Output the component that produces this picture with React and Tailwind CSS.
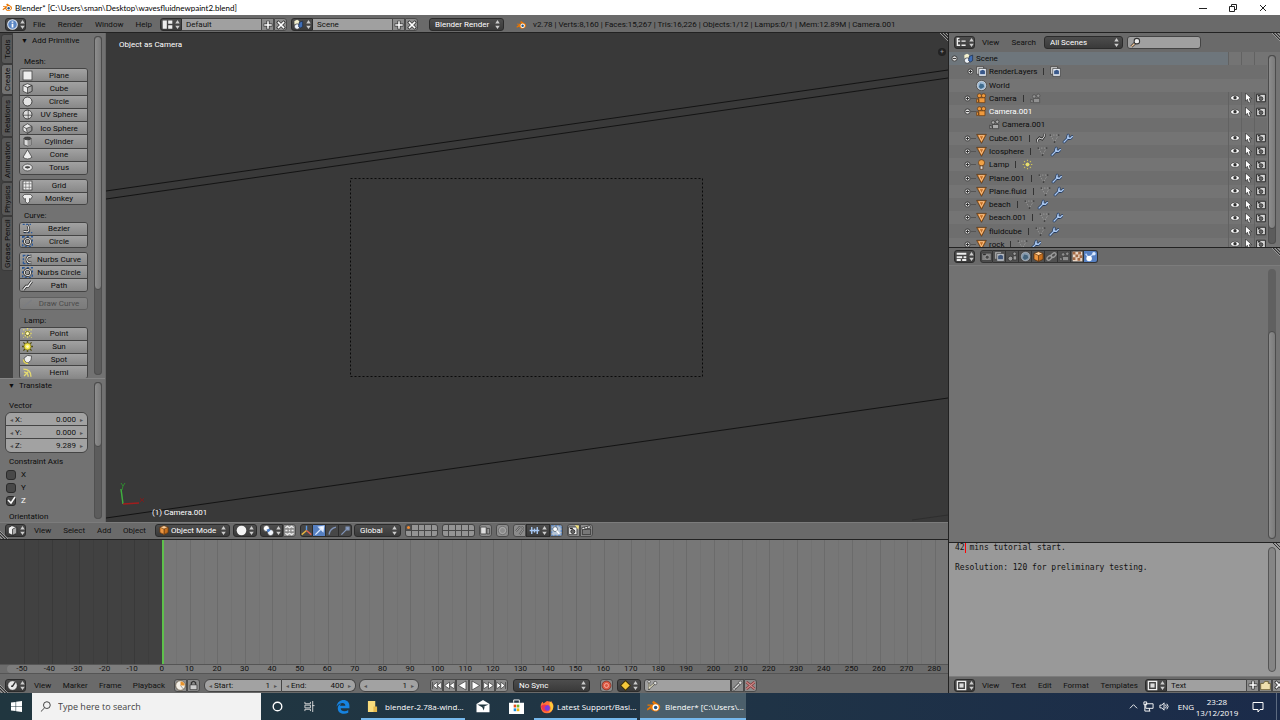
import { useState } from 'react';

const meshGroup = [['Plane', 'plane'], ['Cube', 'cube'], ['Circle', 'circle'], ['UV Sphere', 'uv'], ['Ico Sphere', 'ico'], ['Cylinder', 'cylinder'], ['Cone', 'cone'], ['Torus', 'torus']];
const gridGroup = [['Grid', 'grid'], ['Monkey', 'monkey']];
const bezierGroup = [['Bezier', 'bezier'], ['Circle', 'curveCircle']];
const nurbsGroup = [['Nurbs Curve', 'nurbs'], ['Nurbs Circle', 'curveCircle'], ['Path', 'path']];
const lampGroup = [['Point', 'point'], ['Sun', 'sun'], ['Spot', 'spot'], ['Hemi', 'hemi']];

const tree = [
  { name: 'Camera', icon: 'camera', data: ['camData'], open: '+' },
  { name: 'Camera.001', icon: 'camera', data: [], open: '-', active: true },
  { name: 'Camera.001', icon: 'camData', child: true },
  { name: 'Cube.001', icon: 'mesh', data: ['anim', 'meshData', 'wrench'], open: '+' },
  { name: 'Icosphere', icon: 'mesh', data: ['meshData', 'wrench'], open: '+' },
  { name: 'Lamp', icon: 'lamp', data: ['lampData'], open: '+' },
  { name: 'Plane.001', icon: 'mesh', data: ['meshData', 'wrench'], open: '+' },
  { name: 'Plane.fluid', icon: 'mesh', data: ['meshData', 'wrench'], open: '+' },
  { name: 'beach', icon: 'mesh', data: ['meshData', 'wrench'], open: '+' },
  { name: 'beach.001', icon: 'mesh', data: ['meshData', 'wrench'], open: '+' },
  { name: 'fluidcube', icon: 'mesh', data: ['meshData', 'wrench'], open: '+' },
  { name: 'rock', icon: 'mesh', data: ['meshData', 'wrench'], open: '+' },
];

const frames = Array.from({ length: 34 }, (_, i) => -50 + i * 10);

// all icons share a 16x16 box
const icons = {
  plane: <rect x="1.500" y="1.500" width="13" height="13" fill="#eee" stroke="#333" />,
  cube: <g stroke="#333" strokeLinejoin="round"><path d="M8 1l6.500 2.500v8.500l-6.500 3-6.500-3V3.500z" fill="#eee" /><path d="M8 6.500V15l6.500-3V3.500z" fill="#a5a5a5" /><path d="M1.500 3.500L8 6.500l6.500-3" fill="none" /></g>,
  circle: <circle cx="8" cy="8" r="6.500" fill="#e4e4e4" stroke="#333" strokeWidth="1.300" />,
  uv: <g stroke="#333" fill="none"><circle cx="8" cy="8" r="6.500" fill="#ddd" strokeWidth="1.300" /><path d="M9 1.500v13M1.500 9h13" /></g>,
  ico: <g stroke="#333"><path d="M8 1l6.500 4v6L8 15l-6.500-4V5z" fill="#e8e8e8" /><path d="M8 15l-2-7 8-3v6z" fill="#999" /><path d="M6 8L1.500 5" /></g>,
  cylinder: <g stroke="#333"><path d="M3 3v10q5 3 10 0V3" fill="#ddd" /><path d="M8 5v9q4 0 5-1V3z" fill="#999" stroke="none" /><ellipse cx="8" cy="3.500" rx="5" ry="2" fill="#444" /></g>,
  cone: <path d="M8 1l6.500 11q-6.500 5-13 0z" fill="#eee" stroke="#333" />,
  torus: <g stroke="#333"><ellipse cx="8" cy="8" rx="7" ry="5" fill="#e4e4e4" /><path d="M4.500 7.500q3.500 3 7 0q-3.500-2-7 0" fill="#555" /></g>,
  grid: <g><rect x="1.500" y="1.500" width="13" height="13" fill="#f2f2f2" stroke="#333" /><path d="M5.500 2v12M10.500 2v12M2 5.500h12M2 10.500h12" stroke="#666" /></g>,
  monkey: <path d="M1 5q2-4 5-3h4q3-1 5 3l-2 4-2-1v5l-3 2-3-2V8L3 9z" fill="#eee" stroke="#333" />,
  bezier: <g fill="none"><path d="M1 2h12M3 14h12" stroke="#2c5a9b" strokeDasharray="3 2" strokeWidth="2" /><path d="M2 12q9 2 8-3T8 3" stroke="#222" strokeWidth="3.500" /><path d="M2 12q9 2 8-3T8 3" stroke="#eee" strokeWidth="1.500" /></g>,
  curveCircle: <g fill="none"><path d="M1 1h14v14H1z" stroke="#2c5a9b" strokeDasharray="3 3" strokeWidth="2" /><circle cx="8" cy="8" r="4.500" stroke="#222" strokeWidth="3.500" /><circle cx="8" cy="8" r="4.500" stroke="#ddd" strokeWidth="1.500" /></g>,
  nurbs: <g fill="none"><path d="M2 1v14M2 2h11M2 14h11" stroke="#2c5a9b" strokeDasharray="3 2" strokeWidth="2" /><path d="M14 3q-7 0-7 5t7 5" stroke="#222" strokeWidth="3.500" /><path d="M14 3q-7 0-7 5t7 5" stroke="#eee" strokeWidth="1.500" /></g>,
  path: <g fill="none"><path d="M2 14l4-5h3l5-7" stroke="#222" strokeWidth="4" /><path d="M2 14l4-5h3l5-7" stroke="#eee" strokeWidth="2" /></g>,
  stroke: <path d="M2 13L14 3" stroke="#8a8f9b" strokeWidth="2" />,
  point: <g stroke="#e9dd62" strokeWidth="2"><path d="M8 0v16M0 8h16M2 2l12 12M14 2L2 14" strokeDasharray="2 2" /><circle cx="8" cy="8" r="3" fill="#fff9b0" stroke="#56500f" strokeWidth="1" /></g>,
  sun: <g><path d="M8 0v16M0 8h16M2 2l12 12M14 2L2 14" stroke="#514d1b" strokeWidth="2" /><circle cx="8" cy="8" r="5" fill="#f4e94c" stroke="#7d751c" /><circle cx="8" cy="8" r="2" fill="#fffcc9" /></g>,
  spot: <g stroke="#333"><path d="M3 6l5-4 6 1-1 6-4 4q-6-1-6-7z" fill="#eee" /><path d="M2 8q1 6 7 6" stroke="#e6d84f" strokeWidth="2" fill="none" /></g>,
  hemi: <g fill="none" stroke="#e6db70" strokeWidth="2"><path d="M2 3q11 0 11 11" /><path d="M3 7q6 1 6 7M3 13l6-6" /></g>,
  info: <g><circle cx="8" cy="8" r="7" fill="#5a86c4" stroke="#dde6f3" strokeWidth="1.500" /><path d="M8 3.500v2M8 7v5.500" stroke="#fff" strokeWidth="2.500" /></g>,
  layout: <g fill="#eee"><path d="M1 2h6v12H1zM9 2h6v5H9zM9 9h6v5H9z" /></g>,
  scene: <g><path d="M2 3l4-2 3 2v5H2z" fill="#f4f1cf" /><circle cx="6" cy="11" r="4" fill="#eef3fa" stroke="#333" /><path d="M9 5l5-2v8l-3 2-3-2z" fill="#3f6db5" stroke="#1c2c47" /></g>,
  view3d: <g stroke="#222"><path d="M2 4l5-3 7 2v9l-6 3-6-3z" fill="#eee" /><path d="M8 6v9l6-3V3z" fill="#aaa" /></g>,
  clock: <g><circle cx="8" cy="8" r="7" fill="#e8e8e8" stroke="#222" /><path d="M12 3L8 9H6" stroke="#333" strokeWidth="2" fill="none" /></g>,
  clockKey: <g><circle cx="8" cy="8" r="7" fill="#f4f0e8" stroke="#594a33" /><path d="M8 8V2a6 6 0 0 1 6 6z" fill="#e8932c" /><path d="M8 8l4 5" stroke="#777" /></g>,
  lock: <g><path d="M5 8V4q3-4 6 0v4" stroke="#333" strokeWidth="2" fill="none" /><path d="M3 7h10v7H3z" fill="#ccc" stroke="#333" /></g>,
  list: <path d="M2 2v10h4M2 6h4M8 6h6M8 12h6M1 2h4" stroke="#eee" strokeWidth="2" fill="none" />,
  props: <path d="M1 4h14M1 9h8M11 9h4M1 13h6M9 13h6" stroke="#eee" strokeWidth="3" />,
  doc: <g><path d="M2 2h12v12H2z" fill="#444" stroke="#eee" strokeWidth="2" /><path d="M5 5h6v6H5z" fill="#ddd" /></g>,
  magnify: <g fill="none"><path d="M2 14l5-5" stroke="#333" strokeWidth="4" /><path d="M2 14l5-5" stroke="#f4c89b" strokeWidth="2" /><circle cx="10" cy="6" r="4" stroke="#333" fill="#eee" strokeWidth="1.500" /></g>,
  layers: <g><path d="M1 1h10v11H1z" fill="#ddd" stroke="#333" /><path d="M4 3.500h11v11.500H4z" fill="#e6ecf4" stroke="#333" /><path d="M6 7l4-1.500 3 1.500v5H6z" fill="#39588a" /></g>,
  world: <g><circle cx="8" cy="8" r="6.500" fill="#9fbbd6" stroke="#e6e6e6" /><circle cx="8" cy="8" r="7.500" fill="none" stroke="#444" /><path d="M4 10l2-5 5 1 1 4-5 3z" fill="#406c8e" /></g>,
  camera: <g fill="#ef9a3e" stroke="#5e3510"><circle cx="5" cy="4" r="3" /><circle cx="11" cy="4" r="3" /><path d="M4 7h9v7H4zM1 8l3 2v3l-3 1z" /></g>,
  camData: <g fill="none" stroke="#333"><circle cx="6" cy="5" r="2.500" fill="#aaa" /><circle cx="12" cy="4" r="2.500" fill="#aaa" /><path d="M5 8h9v6H5zM1 9l4 2v2l-4 1z" fill="#aaa" /></g>,
  mesh: <g><path d="M1 2h14L8 15z" fill="#e48f3c" stroke="#4d2d10" /><path d="M4.500 4h7L8 11z" fill="#c56e20" stroke="#ffd8ae" /></g>,
  lamp: <g><circle cx="8" cy="5.500" r="4.500" fill="#f0a246" stroke="#5e3510" /><path d="M6 10h4v5H6z" fill="#ddd" stroke="#5e3510" /></g>,
  meshData: <g fill="none"><path d="M2 3h12L8 13z" stroke="#aaa" strokeDasharray="2 2" /><path d="M1 2h2v2H1zM13 2h2v2h-2zM7 12h2v2H7z" fill="#333" /></g>,
  lampData: <g><path d="M8 1v14M1 8h14M3 3l10 10M13 3L3 13" stroke="#cfc355" strokeWidth="1.500" strokeDasharray="2 2" /><circle cx="8" cy="8" r="2.500" fill="#e8df70" /></g>,
  wrench: <g fill="none" strokeLinecap="round"><path d="M3 13l7-7M9 3l-1 4 4 1 3-3" stroke="#233a5d" strokeWidth="4" /><path d="M3 13l7-7M9 3l-1 4 4 1 3-3" stroke="#a9c6ee" strokeWidth="2" /></g>,
  anim: <g fill="none"><path d="M3 14l-1-4 3-3 4 2 3-4V1" stroke="#222" strokeWidth="3.500" /><path d="M3 14l-1-4 3-3 4 2 3-4V1" stroke="#ddd" strokeWidth="1.500" /></g>,
  eye: <g><path d="M0 8q8-9 16 0-8 8-16 0" fill="#fff" stroke="#333" /><circle cx="8" cy="7.500" r="2.700" fill="#333" /></g>,
  cursor: <path d="M4 0v13l3-3 2 6 3-1-2-6h4z" fill="#fff" stroke="#222" />,
  still: <g><path d="M1 2h14v12H1z" fill="#d5d5d5" stroke="#222" strokeWidth="1.500" /><circle cx="8" cy="9" r="3" fill="#666" stroke="#111" /><path d="M3 4.500h4" stroke="#111" strokeWidth="2" /></g>,
  stillDim: <g><path d="M1 3h14v11H1z" fill="#999" stroke="#222" /><path d="M3 5h4" stroke="#222" strokeWidth="2" /><circle cx="9" cy="9" r="3" fill="#444" stroke="#ccc" /></g>,
  sceneDim: <g fill="#bbb" stroke="#222"><circle cx="5" cy="11" r="3.500" /><path d="M9 7h5v6H9z" /><circle cx="11" cy="4" r="2.500" /></g>,
  cubeO: <g stroke="#5e3510"><path d="M8 1l6.500 2.500V12L8 15l-6.500-3V3.500z" fill="#ffd09a" /><path d="M8 6.500V15l6.500-3V3.500z" fill="#c66f1d" /><path d="M1.500 3.500L8 6.500V15l-6.500-3z" fill="#ed9640" /></g>,
  chain: <g fill="none" stroke="#bbb" strokeWidth="2"><ellipse cx="5" cy="10" rx="4" ry="2.500" transform="rotate(-40 5 10)" /><ellipse cx="11" cy="6" rx="4" ry="2.500" transform="rotate(-40 11 6)" /></g>,
  checker: <g><path d="M1 1h14v14H1z" fill="#e9d5c4" /><path d="M1 1h4v4H1zM9 1h4v4H9zM5 5h4v4H5zM11 6h4v4h-4zM1 9h4v4H1zM8 10h4v4H8z" fill="#a36a45" /></g>,
  physics: <g fill="none"><path d="M1 4l4 6L14 3" stroke="#bcd4f5" strokeWidth="2" /><circle cx="6" cy="11" r="4" fill="#fff" /><circle cx="13" cy="4" r="2.500" fill="#dceaff" /></g>,
  ball: <circle cx="8" cy="8" r="7" fill="#f4f4f4" />,
  pivot: <g><circle cx="5" cy="5" r="4.500" fill="#fff" stroke="#333" /><circle cx="11" cy="11" r="4.500" fill="#f1f5fb" stroke="#333" /><path d="M5 7l4-2 2 3-4 3z" fill="#4c7fc9" /></g>,
  centers: <g fill="none" stroke="#eee" strokeWidth="2"><path d="M2 4l3-2 3 2 3-2 3 2M2 12l3 2 3-2 3 2 3-2M2 8h3M7 8h2M11 8h3" /></g>,
  axis: <g fill="none" strokeWidth="2"><path d="M8 8V1" stroke="#5d9be8" /><path d="M8 8l-7 6" stroke="#e5b43e" /><path d="M8 8l7 6" stroke="#e0604f" /></g>,
  arrow: <path d="M2 14L11 5M7 3l7-1-1 7z" stroke="#dbe8ff" strokeWidth="2" fill="#fff" />,
  arc: <path d="M3 14q1-9 10-11" stroke="#7f93b8" strokeWidth="2" fill="none" />,
  scaleM: <path d="M2 14l8-8M9 3h4v4H9z" stroke="#7f93b8" strokeWidth="2" fill="#8fa0bd" />,
  linked: <g stroke="#333"><path d="M1 3h8v10H1z" fill="#ddd" /><path d="M10 5h4v8h-4z" fill="#999" /></g>,
  ring: <g fill="none"><circle cx="8" cy="8" r="6" stroke="#666" /><circle cx="8" cy="8" r="4.500" stroke="#bbb" /></g>,
  magnet: <g fill="none"><path d="M3 9l5-6q6-1 5 4l-5 7" stroke="#555" strokeWidth="3" /><path d="M3 9l5-6q6-1 5 4l-5 7" stroke="#bbb" /></g>,
  increment: <path d="M1 8h14M4 3v10M8 5v6M12 3v10" stroke="#a7c8f4" strokeWidth="2" />,
  snapTo: <g><path d="M1 1h14v14H1z" stroke="#5d86bd" strokeWidth="2" strokeDasharray="3 2" fill="#b7c6d8" /><circle cx="6" cy="6" r="3.500" fill="#fff" stroke="#345" /><path d="M8 8l4 5" stroke="#fff" strokeWidth="2" /></g>,
  clap: <g stroke="#222"><path d="M2 6h12v8H2z" fill="#777" /><path d="M1 4l12-3 1 3L2 7z" fill="#eee" /><path d="M5 3l1 3M9 2l1 3" /></g>,
  stillGold: <g><path d="M1 3h12v11H1z" fill="#eee" stroke="#222" /><path d="M3 5h4" stroke="#222" strokeWidth="2" /><circle cx="7" cy="9.500" r="3" fill="#666" stroke="#111" /><path d="M10 0l6 1-1 6z" fill="#f4e27a" /></g>,
  first: <path d="M2 3v10M9 3L3 8l6 5zM15 3L9 8l6 5z" fill="#fff" stroke="#333" />,
  prev: <path d="M8 3L1 8l7 5zM15 3L8 8l7 5z" fill="#fff" stroke="#333" />,
  back: <path d="M13 1.500L2 8l11 6.500z" fill="#fff" stroke="#333" />,
  play: <path d="M3 1.500L14 8 3 14.500z" fill="#fff" stroke="#333" />,
  next: <path d="M1 3l7 5-7 5zM8 3l7 5-7 5z" fill="#fff" stroke="#333" />,
  last: <path d="M14 3v10M1 3l6 5-6 5zM7 3l6 5-6 5z" fill="#fff" stroke="#333" />,
  record: <g><circle cx="8" cy="8" r="6.500" fill="#dd5a44" stroke="#6c2a20" /><circle cx="8" cy="8" r="3" fill="none" stroke="#ffc9bf" /></g>,
  diamond: <path d="M8 1l7 7-7 7-7-7z" fill="#f5c93b" stroke="#3b2f05" strokeWidth="1.500" />,
  key: <g fill="none"><path d="M3 13l8-8" stroke="#444" strokeWidth="4" /><path d="M3 13l8-8" stroke="#ddd" strokeWidth="2" /><circle cx="12" cy="4" r="2.500" stroke="#444" fill="#ddd" /><circle cx="3" cy="13" r="2" stroke="#444" fill="#ddd" /></g>,
  keySet: <g fill="none" stroke="#444"><path d="M3 2v12M3 12l8-7" strokeWidth="3" /><path d="M3 2v11M3 12l8-7" stroke="#e6e0c0" strokeWidth="1.500" /><circle cx="12" cy="4.500" r="2.500" fill="#ddd" /><circle cx="3" cy="2.500" r="2" fill="#ddd" /></g>,
  keyX: <g><path d="M2 3l12 10M14 3L2 13" stroke="#8a3b3b" strokeWidth="4" /><path d="M2 3l12 10M14 3L2 13" stroke="#d69595" strokeWidth="1.500" /></g>,
  folder: <path d="M1 14V5h4l2-3h5v3h3v9z" fill="#efe0ae" stroke="#544818" />,
};

function Icon({ name, className = 'size-[11px]' }) {
  return <svg viewBox="0 0 16 16" className={`${className} shrink-0`} aria-hidden="true">{icons[name]}</svg>;
}

function PlusIcon() {
  return <svg viewBox="0 0 16 16" className="size-[10px]"><path d="M8 1v14M1 8h14" stroke="#333" strokeWidth="5" /><path d="M8 2v12M2 8h12" stroke="#fff" strokeWidth="2.500" /></svg>;
}

function CloseIcon() {
  return <svg viewBox="0 0 16 16" className="size-[10px]"><path d="M2 2l12 12M14 2L2 14" stroke="#333" strokeWidth="5" /><path d="M3 3l10 10M13 3L3 13" stroke="#fff" strokeWidth="2.500" /></svg>;
}

function BlenderLogo({ className }) {
  return (
    <svg viewBox="0 0 24 20" className={`${className} shrink-0`} aria-hidden="true">
      <path d="M11 1l10 7a7.500 7 0 1 1-14 5L2 16l-1-2 6-5H2V7h10L9 4z" fill="#ea7600" />
      <circle cx="14.500" cy="11.500" r="4.800" fill="#fff" />
      <circle cx="14.500" cy="11.500" r="2.700" fill="#265787" />
    </svg>
  );
}

function Updown() {
  return <svg viewBox="0 0 6 12" className="h-[9px] w-[5px] shrink-0"><path d="M3 0l3 4.500H0zM3 12l3-4.500H0z" fill="#ccc" /></svg>;
}

// drag handle in the corner of an area
function Corner({ className }) {
  return <svg viewBox="0 0 8 8" className={`${className} pointer-events-none absolute size-2`}><path d="M0 0l8 8M3 0l5 5M6 0l2 2" stroke="#999" /><path d="M1 0l7 7M4 0l4 4" stroke="#333" /></svg>;
}

// dark editor / datablock type picker
function TypeButton({ icon, label, className = 'w-[21px] rounded-[3px]' }) {
  return (
    <button aria-label={label} className={`${className} h-[13px] shrink-0 flex items-center justify-center gap-[2px] border border-[#2b2b2b] bg-gradient-to-b from-[#4d4d4d] to-[#3a3a3a]`}>
      <Icon name={icon} />
      <Updown />
    </button>
  );
}

function DarkSelect({ label, value, className = '', icon }) {
  return (
    <div className={`${className} relative h-[13px] shrink-0 flex items-center rounded-[3px] border border-[#2b2b2b] bg-gradient-to-b from-[#4d4d4d] to-[#3a3a3a] px-[3px] text-white`}>
      {icon && <Icon name={icon} className="size-[10px]" />}
      <select aria-label={label} className="h-[11px] min-w-0 flex-1 appearance-none bg-transparent pl-[2px] leading-[11px] outline-none">
        <option>{value}</option>
      </select>
      <Updown />
    </div>
  );
}

function Menus({ items, className }) {
  return (
    <nav className={`${className} flex shrink-0 justify-between text-[#111]`}>
      {items.map((item) => <button key={item}>{item}</button>)}
    </nav>
  );
}

function LightButton({ label, children, className = '' }) {
  return (
    <button aria-label={label} className={`${className} h-[13px] w-[13px] shrink-0 flex items-center justify-center border border-[#4a4a4a] bg-[#8c8c8c]`}>
      {children}
    </button>
  );
}

function Datablock({ label, value, icon, width }) {
  return (
    <div className="flex shrink-0">
      <TypeButton icon={icon} label={label} className="w-[22px] rounded-l-[3px]" />
      <input aria-label={label} defaultValue={value} className={`${width} h-[13px] border-y border-[#444] bg-[#a0a0a0] px-1 text-[#111] outline-none`} />
      <LightButton label={`Add ${label}`}><PlusIcon /></LightButton>
      <LightButton label={`Remove ${label}`} className="rounded-r-[3px]"><CloseIcon /></LightButton>
    </div>
  );
}

function Scrollbar({ className, thumb }) {
  return (
    <div className={`${className} w-2 shrink-0 rounded-full bg-[#5c5c5c] ring-1 ring-inset ring-[#505050]`}>
      <div className={`${thumb} w-2 rounded-full border border-[#4c4c4c] bg-gradient-to-r from-[#8d8d8d] to-[#7a7a7a]`} />
    </div>
  );
}

function ButtonGroup({ items, className }) {
  return (
    <div className={`${className} flex shrink-0 flex-col overflow-hidden rounded-[3px] border border-[#444]`}>
      {items.map(([text, icon]) => (
        <button key={text} className="flex min-h-0 flex-1 items-center border-b border-[#444] bg-gradient-to-b from-[#a2a2a2] to-[#888] pl-[2px] last:border-b-0">
          <Icon name={icon} />
          <span className="flex-1 pr-[2px] text-center">{text}</span>
        </button>
      ))}
    </div>
  );
}

function NumberField({ label, value, className = '', id }) {
  return (
    <div className={`${className} flex h-[13px] shrink-0 items-center border border-[#444] bg-[#a2a2a2] px-[4px] text-[#111]`}>
      <span className="text-[6px] text-[#555]">◂</span>
      {label && <label htmlFor={id} className="pl-[2px]">{label}</label>}
      <input id={id} aria-label={label ? undefined : 'Current frame'} defaultValue={value} className="h-[11px] w-0 min-w-0 flex-1 bg-transparent pr-1 text-right outline-none" />
      <span className="text-[6px] text-[#555]">▸</span>
    </div>
  );
}

function TitleBar() {
  return (
    <div className="flex h-[15px] shrink-0 items-center bg-white pl-[2px] font-['Lato',sans-serif] text-[8px] leading-[14px] text-black">
      <BlenderLogo className="h-[9px] w-[11px]" />
      <h1 className="flex-1 pl-[2px]">Blender* [C:\Users\sman\Desktop\wavesfluidnewpaint2.blend]</h1>
      <div className="flex w-[82px] justify-between pr-3">
        <button aria-label="Minimize"><svg viewBox="0 0 10 10" className="size-[10px]"><path d="M1 5.500h8" stroke="#222" /></svg></button>
        <button aria-label="Restore"><svg viewBox="0 0 10 10" className="size-[10px]"><path d="M1.500 3.500h5v5h-5zM3.500 3v-1.500h5v5H7" fill="none" stroke="#222" /></svg></button>
        <button aria-label="Close"><svg viewBox="0 0 10 10" className="size-[10px]"><path d="M2 2l6 6M8 2l-6 6" stroke="#222" /></svg></button>
      </div>
    </div>
  );
}

function InfoHeader() {
  return (
    <header className="flex h-[18px] shrink-0 items-center overflow-hidden whitespace-nowrap border-b border-[#222] bg-[#6a6a6a] pt-[2px] pl-[5px]">
      <TypeButton icon="info" label="Editor type" />
      <Menus items={['File', 'Render', 'Window', 'Help']} className="ml-[7px] w-[119px]" />
      <div className="ml-2 flex gap-[4px]">
        <Datablock label="Screen" value="Default" icon="layout" width="w-[79px]" />
        <Datablock label="Scene" value="Scene" icon="scene" width="w-[79px]" />
      </div>
      <DarkSelect label="Engine" value="Blender Render" className="ml-[11px] w-[75px]" />
      <BlenderLogo className="ml-3 h-[10px] w-[11px]" />
      <p className="pl-[6px] text-[#111]">v2.78 | Verts:8,160 | Faces:15,267 | Tris:16,226 | Objects:1/12 | Lamps:0/1 | Mem:12.89M | Camera.001</p>
    </header>
  );
}

const tabs = [
  ['Tools', 'h-[30px]'], ['Create', 'h-[31px]'], ['Relations', 'h-[42px]'],
  ['Animation', 'h-[45px]'], ['Physics', 'h-[34px]'], ['Grease Pencil', 'h-[55px]'],
];

function ToolShelf() {
  const [tab, setTab] = useState('Create');
  return (
    <div className="flex min-h-0 flex-1 overflow-hidden">
      <div className="flex w-[13px] shrink-0 flex-col bg-[#424242] pt-[1px] pl-[1px]">
        {tabs.map(([name, size]) => (
          <button
            key={name}
            onClick={() => setTab(name)}
            className={`${size} ${name === tab ? 'bg-[#727272]' : 'bg-[#585858]'} flex shrink-0 rotate-180 items-center justify-center rounded-r-[3px] border border-[#3a3a3a] [writing-mode:vertical-rl]`}
          >
            {name}
          </button>
        ))}
      </div>
      <div className="flex min-w-0 flex-1 flex-col overflow-hidden pt-[3px] pl-[6px]">
        <h2 className="flex h-[10px] shrink-0 items-center gap-1 pl-[2px] leading-[10px]"><span className="text-[7px]">▼</span>Add Primitive</h2>
        <p className="mt-[11px] h-[10px] shrink-0 pl-[5px] leading-[10px]">Mesh:</p>
        <ButtonGroup items={meshGroup} className="mt-[1px] h-[107px]" />
        <ButtonGroup items={gridGroup} className="mt-1 h-[26px]" />
        <p className="mt-[6px] h-[10px] shrink-0 pl-[5px] leading-[10px]">Curve:</p>
        <ButtonGroup items={bezierGroup} className="mt-[1px] h-[26px]" />
        <ButtonGroup items={nurbsGroup} className="mt-1 h-10" />
        <ButtonGroup items={[['Draw Curve', 'stroke']]} className="mt-[5px] h-[13px] opacity-40" />
        <p className="mt-[6px] h-[10px] shrink-0 pl-[5px] leading-[10px]">Lamp:</p>
        <ButtonGroup items={lampGroup} className="mt-[1px] h-[52px]" />
      </div>
      <div className="flex w-[17px] shrink-0 justify-end py-[3px] pr-[3px]">
        <Scrollbar className="h-full" thumb="h-3/4" />
      </div>
    </div>
  );
}

function TranslatePanel() {
  const [axes, setAxes] = useState({ X: false, Y: false, Z: true });
  return (
    <div className="flex h-36 shrink-0 overflow-hidden border-t border-[#868686]">
      <div className="min-w-0 flex-1 pt-[2px] pl-[5px]">
        <h2 className="flex h-[10px] items-center gap-1 pl-[3px] leading-[10px]"><span className="text-[7px]">▼</span>Translate</h2>
        <p className="mt-[10px] pl-1 leading-[10px]">Vector</p>
        <div className="mt-[1px] overflow-hidden rounded-[6px] border border-[#444]">
          <NumberField id="vx" label="X:" value="0.000" className="border-x-0 border-t-0" />
          <NumberField id="vy" label="Y:" value="0.000" className="border-x-0 border-t-0" />
          <NumberField id="vz" label="Z:" value="9.289" className="border-x-0 border-y-0" />
        </div>
        <p className="mt-1 pl-1 leading-[10px]">Constraint Axis</p>
        <div className="mt-[1px]">
          {Object.keys(axes).map((axis) => (
            <label key={axis} className={`${axes[axis] ? 'text-white' : ''} flex h-[13px] items-center gap-[5px] pl-[1px]`}>
              <span className="relative flex size-[10px]">
                <input type="checkbox" checked={axes[axis]} onChange={() => setAxes({ ...axes, [axis]: !axes[axis] })} className="size-[10px] appearance-none rounded-[3px] border border-[#2b2b2b] bg-[#484848]" />
                {axes[axis] && <svg viewBox="0 0 10 10" className="pointer-events-none absolute inset-0"><path d="M2 4l3 3 4-6" stroke="#fff" strokeWidth="1.500" fill="none" /></svg>}
              </span>
              {axis}
            </label>
          ))}
        </div>
        <p className="mt-[5px] pl-1 leading-[10px]">Orientation</p>
      </div>
      <div className="flex w-[17px] shrink-0 justify-end py-[3px] pr-[3px]">
        <Scrollbar className="h-full" thumb="h-[65px]" />
      </div>
    </div>
  );
}

function Viewport() {
  return (
    <div className="relative min-w-0 flex-1 overflow-hidden bg-[#393939] text-white">
      <svg viewBox="0 0 842 489" preserveAspectRatio="none" className="absolute inset-0 h-full w-full">
        <g fill="none" stroke="#0a0a0a" strokeWidth="0.800">
          <path d="M0 158L842 37M0 166L842 45M0 485L842 365" />
          <path d="M806 487L842 482" stroke="#2c2c2c" />
          <rect x="244.500" y="145.500" width="352" height="198" strokeWidth="1" strokeDasharray="2 2" />
        </g>
        <path d="M17 471L15 456" stroke="#3fae3f" strokeWidth="1.500" />
        <path d="M17 471l16-1" stroke="#a11d1d" strokeWidth="1.500" />
        <path d="M15 450l2 3 2-3M17 453l-1 4" stroke="#2f8a2f" fill="none" />
        <path d="M34 465l4 4M38 465l-4 4" stroke="#7a1c1c" />
      </svg>
      <p className="absolute top-[6px] left-[13px]">Object as Camera</p>
      <p className="absolute bottom-1 left-[46px]">(1) Camera.001</p>
      <button aria-label="Show properties" className="absolute top-[15px] right-[2px] flex size-2 items-center justify-center rounded-full bg-[#222] text-[7px] leading-[7px] text-[#999]">+</button>
      <Corner className="top-0 right-0" />
    </div>
  );
}

function LayerGrid({ first }) {
  return (
    <div className="grid h-[13px] w-[33px] shrink-0 grid-cols-5 grid-rows-2 gap-px overflow-hidden rounded-[3px] border border-[#444] bg-[#484848]">
      {Array.from({ length: 10 }, (_, i) => (
        <button key={i} aria-label={`Layer ${i + 1}`} className={`${first && i === 0 ? 'bg-[#505050]' : 'bg-[#949494]'} flex items-center justify-center`}>
          {first && i === 0 && <span className="size-[3px] rounded-full bg-[#ef8a32]" />}
        </button>
      ))}
    </div>
  );
}

function DarkTool({ icon, label, active }) {
  return (
    <button aria-label={label} className={`${active ? 'bg-[#5680c2]' : 'bg-[#474747]'} flex h-[13px] w-[13px] shrink-0 items-center justify-center border-y border-r border-[#2b2b2b] first:rounded-l-[3px] first:border-l last:rounded-r-[3px]`}>
      <Icon name={icon} />
    </button>
  );
}

function ViewHeader() {
  return (
    <div className="relative flex h-[18px] shrink-0 items-center overflow-hidden border-y border-t-[#7c7c7c] border-b-[#222] bg-[#6a6a6a] pb-[2px] pl-[5px]">
      <TypeButton icon="view3d" label="Editor type" />
      <Menus items={['View', 'Select', 'Add', 'Object']} className="ml-2 w-28" />
      <DarkSelect label="Mode" value="Object Mode" icon="cubeO" className="ml-[9px] w-[75px]" />
      <TypeButton icon="ball" label="Shading" className="ml-[3px] w-6 rounded-[3px]" />
      <div className="ml-[3px] flex">
        <TypeButton icon="pivot" label="Pivot" className="w-[23px] rounded-l-[3px]" />
        <LightButton label="Centers only" className="rounded-r-[3px]"><Icon name="centers" /></LightButton>
      </div>
      <div className="ml-[4px] flex">
        <DarkTool icon="axis" label="Manipulator" />
        <DarkTool icon="arrow" label="Translate" active />
        <DarkTool icon="arc" label="Rotate" />
        <DarkTool icon="scaleM" label="Scale" />
      </div>
      <DarkSelect label="Orientation" value="Global" className="ml-[2px] w-[47px]" />
      <div className="ml-[4px] flex gap-[4px]">
        <LayerGrid first />
        <LayerGrid />
      </div>
      <LightButton label="Lock camera" className="ml-1 rounded-[3px]"><Icon name="linked" /></LightButton>
      <LightButton label="Proportional edit" className="ml-1 rounded-[3px]"><Icon name="ring" /></LightButton>
      <div className="ml-1 flex">
        <LightButton label="Snap" className="rounded-l-[3px]"><Icon name="magnet" /></LightButton>
        <TypeButton icon="increment" label="Snap element" className="w-6" />
        <LightButton label="Snap target" className="rounded-r-[3px]"><Icon name="snapTo" /></LightButton>
      </div>
      <div className="ml-1 flex">
        <LightButton label="Render image" className="rounded-l-[3px]"><Icon name="stillGold" /></LightButton>
        <LightButton label="Render animation" className="rounded-r-[3px]"><Icon name="clap" /></LightButton>
      </div>
      <Corner className="bottom-0 left-0 rotate-180" />
    </div>
  );
}

const transport = [['first', 'Jump to start'], ['prev', 'Previous keyframe'], ['back', 'Play backwards'], ['play', 'Play'], ['next', 'Next keyframe'], ['last', 'Jump to end']];

function Timeline() {
  return (
    <section className="flex h-[153px] shrink-0 flex-col">
      <div className="min-h-0 flex-1 overflow-hidden bg-[#777]">
        <svg viewBox="0 0 948 124" preserveAspectRatio="none" className="h-full w-full">
          <rect width="162" height="124" fill="#414141" />
          {frames.map((f, i) => (
            <g key={f}>
              <rect x={Math.round(24 + i * 27.6)} width="1" height="124" fill={f < 0 ? '#393939' : '#6b6b6b'} />
              <rect x={Math.round(38 + i * 27.6)} width="1" height="124" fill={f < 0 ? '#3d3d3d' : '#727272'} />
            </g>
          ))}
          <rect x="162" width="2" height="124" fill="#5ec04c" />
        </svg>
      </div>
      <div className="relative grid h-[9px] shrink-0 grid-cols-[repeat(34,minmax(0,1fr))] border-t border-[#555] bg-[#6c6c6c] pl-[10px] text-[#111]">
        <div className="absolute inset-y-0 left-[7px] w-[69%] rounded-full bg-[#7d7d7d]" />
        {frames.map((f) => (
          <span key={f} className={`${f < 0 ? 'pr-1' : ''} relative text-center leading-2`}>{f}</span>
        ))}
      </div>
      <div className="relative flex h-5 shrink-0 items-center overflow-hidden border-t border-[#555] bg-[#6a6a6a] pt-[3px] pl-[5px]">
        <TypeButton icon="clock" label="Editor type" />
        <Menus items={['View', 'Marker', 'Frame', 'Playback']} className="ml-2 w-[131px]" />
        <div className="ml-[9px] flex">
          <LightButton label="Use preview range" className="rounded-l-[3px]"><Icon name="clockKey" /></LightButton>
          <LightButton label="Lock time" className="rounded-r-[3px]"><Icon name="lock" /></LightButton>
        </div>
        <div className="ml-1 flex">
          <NumberField id="start" label="Start:" value="1" className="w-[78px] rounded-l-[6px]" />
          <NumberField id="end" label="End:" value="400" className="w-[74px] rounded-r-[6px] border-l-0" />
        </div>
        <NumberField value="1" className="ml-[3px] w-[60px] rounded-[6px]" />
        <div className="ml-[11px] flex">
          {transport.map(([icon, label]) => (
            <LightButton key={icon} label={label} className="first:rounded-l-[3px] last:rounded-r-[3px]"><Icon name={icon} /></LightButton>
          ))}
        </div>
        <DarkSelect label="Sync" value="No Sync" className="ml-[5px] w-[77px]" />
        <LightButton label="Record" className="ml-[10px] rounded-[3px]"><Icon name="record" /></LightButton>
        <TypeButton icon="diamond" label="Keyframe type" className="ml-1 w-6 rounded-[3px]" />
        <div className="ml-[3px] flex">
          <div className="flex h-[13px] w-[87px] items-center rounded-l-[3px] border border-[#444] bg-[#a0a0a0] px-[2px]">
            <Icon name="keySet" />
            <input aria-label="Keying set" className="w-0 min-w-0 flex-1 bg-transparent outline-none" />
          </div>
          <LightButton label="Insert keyframe"><Icon name="key" /></LightButton>
          <LightButton label="Delete keyframe" className="rounded-r-[3px]"><Icon name="keyX" /></LightButton>
        </div>
        <Corner className="bottom-0 left-0 rotate-180" />
      </div>
    </section>
  );
}

function Expander({ type }) {
  return (
    <svg viewBox="0 0 8 8" className="size-[7px] shrink-0">
      <circle cx="4" cy="4" r="3" fill="#ddd" stroke="#333" />
      <path d={type === '+' ? 'M2 4h4M4 2v4' : 'M2 4h4'} stroke="#222" />
    </svg>
  );
}

function TreeRow({ row, striped }) {
  return (
    <li className={`${striped ? 'bg-[#6e6e6e]' : 'bg-[#747474]'} flex min-h-0 flex-1 items-center`}>
      <div className={`${row.child ? 'pl-10' : 'pl-[15px]'} flex min-w-0 flex-1 items-center`}>
        {row.open && <Expander type={row.open} />}
        {!row.child && <span className="h-px w-[5px] bg-[#555]" />}
        <Icon name={row.icon} />
        <span className={`${row.active ? 'text-white' : ''} pl-[2px]`}>{row.name}</span>
        {row.data?.length > 0 && <span className="mx-[6px] h-[7px] w-px bg-[#333]" />}
        <span className="flex gap-[2px]">
          {row.data?.map((d) => <Icon key={d} name={d} className={d === 'camData' ? 'size-[11px] opacity-60' : 'size-[11px]'} />)}
        </span>
      </div>
      <div className="flex h-full w-[39px] shrink-0 items-stretch">
        {['eye', 'cursor', 'still'].map((i) => (
          <span key={i} className="flex flex-1 items-center justify-center border-l border-[#626262]">
            {row.open && <button aria-label={`${i} ${row.name}`}><Icon name={i} className="size-[10px]" /></button>}
          </span>
        ))}
      </div>
    </li>
  );
}

function Outliner() {
  return (
    <section className="flex h-[215px] shrink-0 flex-col overflow-hidden">
      <div className="relative flex h-[19px] shrink-0 items-center bg-[#6a6a6a] pl-[5px]">
        <TypeButton icon="list" label="Editor type" />
        <Menus items={['View', 'Search']} className="ml-[7px] w-[54px]" />
        <DarkSelect label="Display mode" value="All Scenes" className="ml-2 w-[79px]" />
        <label className="ml-1 flex h-[13px] w-[74px] items-center rounded-[3px] border border-[#444] bg-[#a0a0a0] px-[2px]">
          <Icon name="magnify" />
          <input aria-label="Filter" className="w-0 min-w-0 flex-1 bg-transparent outline-none" />
        </label>
        <Corner className="top-0 right-0" />
      </div>
      <div className="flex min-h-0 flex-1 overflow-hidden border-b border-[#222] bg-[#747474]">
        <div className="min-w-0 flex-1">
          <ul className="flex h-[199px] flex-col">
            <li className="flex min-h-0 flex-1 items-center">
              <div className="flex h-full min-w-0 flex-1 items-center gap-[2px] bg-[#6e767c] pl-[2px]">
                <Expander type="-" /><span className="w-px" /><Icon name="scene" />Scene
              </div>
              <div className="flex h-full w-[39px]">
                <span className="flex-1 border-l border-[#626262]" /><span className="flex-1 border-l border-[#626262]" /><span className="flex-1 border-l border-[#626262]" />
              </div>
            </li>
            <li className="flex min-h-0 flex-1 items-center bg-[#6e6e6e] pl-[18px]">
              <Expander type="+" /><span className="w-[2px]" /><Icon name="layers" />
              <span className="pl-[2px]">RenderLayers</span>
              <span className="mx-[6px] h-[7px] w-px bg-[#333]" />
              <Icon name="layers" />
            </li>
            <li className="flex min-h-0 flex-1 items-center pl-[27px]">
              <Icon name="world" /><span className="pl-[2px]">World</span>
            </li>
            {tree.map((row, i) => <TreeRow key={i} row={row} striped={i % 2 === 0} />)}
          </ul>
        </div>
        <div className="flex w-[13px] shrink-0 justify-start py-[3px] pl-[1px]">
          <Scrollbar className="h-full" thumb="h-[92%]" />
        </div>
      </div>
    </section>
  );
}

const contexts = ['stillDim', 'layers', 'sceneDim', 'world', 'cubeO', 'chain', 'camData', 'checker', 'physics'];

function Properties() {
  const [context, setContext] = useState('physics');
  return (
    <section className="flex min-h-0 flex-1 flex-col border-b border-[#222]">
      <div className="relative flex h-[18px] shrink-0 items-center border-b border-[#7c7c7c] bg-[#6a6a6a] pl-[5px]">
        <TypeButton icon="props" label="Editor type" />
        <div className="ml-[5px] flex">
          {contexts.map((c) => (
            <button key={c} aria-label={c} onClick={() => setContext(c)} className={`${c === context ? 'bg-[#5680c2]' : 'bg-[#505050]'} flex h-[13px] w-[13px] items-center justify-center border-y border-r border-[#333] first:rounded-l-[3px] first:border-l last:w-[14px] last:rounded-r-[3px]`}>
              <Icon name={c} className={c === context || c === 'cubeO' || c === 'checker' ? 'size-[11px]' : 'size-[11px] opacity-70'} />
            </button>
          ))}
        </div>
        <Corner className="top-0 right-0" />
      </div>
      <div className="flex min-h-0 flex-1 justify-end bg-[#727272] py-[3px] pr-1">
        <div className="flex h-full w-2 flex-col justify-end rounded-full bg-[#606060]">
          <div className="h-[77%] rounded-full border border-[#4c4c4c] bg-gradient-to-r from-[#8d8d8d] to-[#7a7a7a]" />
        </div>
      </div>
    </section>
  );
}

function TextEditor() {
  return (
    <section className="flex h-[150px] shrink-0 flex-col">
      <div className="relative flex min-h-0 flex-1 bg-[#999] pr-1">
        <textarea aria-label="Text" defaultValue={'42 mins tutorial start.\n\nResolution: 120 for preliminary testing.'} className="min-w-0 flex-1 resize-none bg-transparent pl-[6px] font-['DejaVu_Sans_Mono',monospace] text-[8px] leading-[10px] text-[#111] outline-none" />
        <span className="absolute top-0 left-4 h-[10px] w-px bg-[#f00]" />
        <div className="py-1"><div className="h-full w-2 rounded-full border border-[#555] bg-[#858585]" /></div>
        <Corner className="top-0 right-0" />
      </div>
      <div className="flex h-[17px] shrink-0 items-center overflow-hidden border-t border-[#7c7c7c] bg-[#6a6a6a] pl-[5px]">
        <TypeButton icon="doc" label="Editor type" />
        <Menus items={['View', 'Text', 'Edit', 'Format', 'Templates']} className="ml-[7px] w-[156px]" />
        <div className="ml-[7px] flex">
          <TypeButton icon="doc" label="Browse text" className="w-[22px] rounded-l-[3px]" />
          <input aria-label="Text name" defaultValue="Text" className="h-[13px] w-[79px] border-y border-[#444] bg-[#a0a0a0] px-1 text-[#111] outline-none" />
          <LightButton label="New text"><PlusIcon /></LightButton>
          <LightButton label="Open text"><Icon name="folder" /></LightButton>
          <LightButton label="Unlink text"><CloseIcon /></LightButton>
        </div>
      </div>
    </section>
  );
}

function TaskApp({ label, children, className = '' }) {
  return (
    <button className={`${className} flex h-full shrink-0 items-center gap-[3px] border-b-2 border-[#76b9ed] pt-[2px] pl-[6px] whitespace-nowrap`}>
      {children}
      {label}
    </button>
  );
}

function Taskbar() {
  return (
    <footer className="flex h-[27px] shrink-0 items-center bg-gradient-to-r from-[#20363f] via-[#203545] to-[#1b2b4a] font-['Open_Sans',sans-serif] text-[8px] text-white">
      <button aria-label="Start" className="flex w-8 justify-center"><svg viewBox="0 0 12 12" className="size-[11px]"><path d="M0 1.700l5-.7v4.700H0zM5.600.900L12 0v5.700H5.600zM0 6.300h5V11l-5-.7zM5.600 6.300H12V12l-6.400-.9z" fill="#fff" /></svg></button>
      <label className="flex h-full w-[229px] items-center gap-[7px] bg-[#f2f2f2] pl-2">
        <svg viewBox="0 0 12 12" className="size-[11px]"><circle cx="7.500" cy="4.500" r="3.700" fill="none" stroke="#333" /><path d="M5 7.500L1 11.500" stroke="#333" /></svg>
        <input aria-label="Search" placeholder="Type here to search" className="min-w-0 flex-1 bg-transparent text-[9px] outline-none placeholder:text-[#444]" />
      </label>
      <button aria-label="Cortana" className="flex w-8 justify-center"><svg viewBox="0 0 12 12" className="size-[11px]"><circle cx="6" cy="6" r="4.700" fill="none" stroke="#fff" strokeWidth="1.500" /></svg></button>
      <button aria-label="Task view" className="flex w-8 justify-center"><svg viewBox="0 0 12 12" className="size-[11px]"><path d="M1 1v2h6V1M1 11V9h6v2M1 4.500h6v3H1zM9.500 0v12M9 5h2.500" fill="none" stroke="#ddd" /></svg></button>
      <button aria-label="Edge" className="flex w-9 justify-center"><svg viewBox="0 0 24 24" className="size-[14px]"><path d="M1 11C2 4 7 0 13 0c6 0 10 4 10 10v4H8c0 5 7 7 13 3v5c-8 4-18 1-18-8 0-4 3-7 6-8-1 1-2 3-2 4h9c0-6-8-7-15 1z" fill="#1683e0" /></svg></button>
      <TaskApp label="blender-2.78a-wind..." className="w-[104px]"><svg viewBox="0 0 12 14" className="mr-1 h-[13px] w-[11px]"><path d="M1 1h8v12H1z" fill="#f9dc7c" /><path d="M7 7h4v6H7z" fill="#e6b94c" /></svg></TaskApp>
      <button aria-label="Mail" className="flex w-9 justify-center"><svg viewBox="0 0 18 16" className="h-[13px] w-[16px]"><path d="M1 5l8-5 8 5v10H1z" fill="#fff" /><path d="M2 5.500h14L8 9zM8 9l2 4 1-5z" fill="#20363f" /></svg></button>
      <button aria-label="Store" className="flex w-[30px] justify-center"><svg viewBox="0 0 16 16" className="size-[15px]"><path d="M5 4V1h6v3" fill="none" stroke="#fff" /><path d="M0 4h16v12H0z" fill="#fff" /><path d="M5 6h2.700v3H5z" fill="#e74c1d" /><path d="M8.300 6H11v3H8.300z" fill="#6fb52c" /><path d="M5 10h2.700v3H5z" fill="#1b91e0" /><path d="M8.300 10H11v3H8.300z" fill="#f5b70b" /></svg></button>
      <TaskApp label="Latest Support/Basi..." className="ml-[3px] w-[103px]">
        <svg viewBox="0 0 16 16" className="size-[14px] shrink-0"><path d="M8 1q3 0 4 2l1-2q3 4 2 8-1 6-7 6-6 0-7-6-1-4 2-7l1 2z" fill="#ff7139" /><path d="M11 1q5 3 4 8-1 4-5 5 4-4 1-8z" fill="#ffca3a" /><circle cx="8" cy="9" r="3.300" fill="#7a3bdc" /><path d="M1 7q3-3 7-1l-3 2q0 4 4 5-5 1-7-3z" fill="#f0334d" /></svg>
      </TaskApp>
      <TaskApp label="Blender* [C:\Users\..." className="ml-[3px] w-[106px] bg-[#4b5f6b]"><BlenderLogo className="h-[13px] w-[16px]" /></TaskApp>
      <div className="flex h-full flex-1 items-center justify-end">
        <div className="flex items-center gap-[5px]">
          <svg viewBox="0 0 10 10" className="size-[9px]"><path d="M1 7l4-4 4 4" fill="none" stroke="#fff" /></svg>
          <svg viewBox="0 0 12 12" className="size-[11px]"><path d="M3 3h8v5H3zM1 1h3v3H1zM2 4v7h6M7 8v3" fill="none" stroke="#fff" /></svg>
          <svg viewBox="0 0 12 12" className="size-[11px]"><path d="M1 4.500h2l2.500-2.500v8L3 7.500H1zM7 4q2 2 0 4M8.500 3q3 3 0 6" fill="none" stroke="#fff" /></svg>
          <span className="pl-[3px]">ENG</span>
        </div>
        <p className="w-[46px] text-center leading-[11px]">23:28<br />13/12/2019</p>
        <button aria-label="Notifications" className="flex w-9 justify-center"><svg viewBox="0 0 12 12" className="size-3"><path d="M1 1.500h10v7H8l-2 2.500v-2.500H1z" fill="none" stroke="#fff" /></svg></button>
        <span className="h-full w-1 border-l border-[#5c6a80]" />
      </div>
    </footer>
  );
}

function App() {
  return (
    <div className="flex h-screen flex-col overflow-hidden bg-[#727272] font-['Roboto',sans-serif] text-[8px] leading-[11px] text-[#0c0c0c]">
      <TitleBar />
      <InfoHeader />
      <main className="flex min-h-0 flex-1">
        <div className="flex min-w-0 flex-1 flex-col">
          <div className="flex min-h-0 flex-1">
            <aside className="flex w-[106px] shrink-0 flex-col overflow-hidden border-r border-[#666] bg-[#727272]">
              <ToolShelf />
              <TranslatePanel />
            </aside>
            <Viewport />
          </div>
          <ViewHeader />
          <Timeline />
        </div>
        <aside className="flex w-[332px] shrink-0 flex-col border-l border-[#222]">
          <Outliner />
          <Properties />
          <TextEditor />
        </aside>
      </main>
      <Taskbar />
    </div>
  );
}

export default App;
